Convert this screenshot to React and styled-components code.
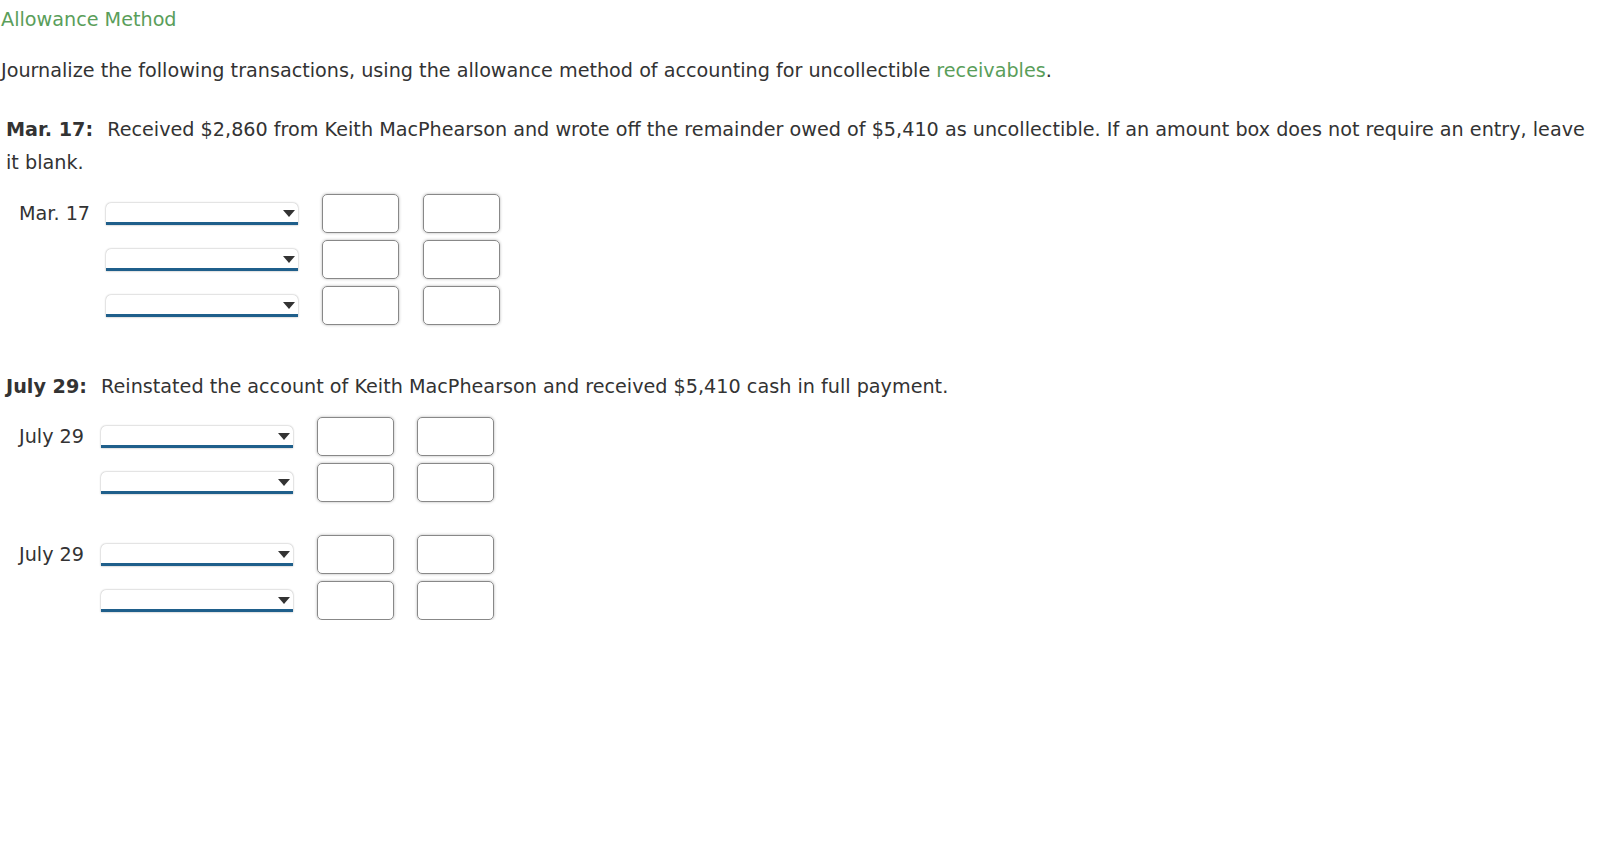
import React from "react";
import styled, { createGlobalStyle } from "styled-components";

const Global = createGlobalStyle`
    body {
        margin: 0;
        background: #fff;
        font-family: "DejaVu Sans", Verdana, sans-serif;
        color: #333;
        font-size: 19.2px;
    }
`;

const Page = styled.div`
    padding: 7px 0 0 1px;
`;

const Title = styled.div`
    color: #5a9e5a;
    line-height: 26px;
`;

const Intro = styled.p`
    margin: 25px 0 0 0;
    line-height: 26px;
`;

const Green = styled.span`
    color: #5a9e5a;
`;

const Problem = styled.div`
    margin: ${(props) => props.top}px 0 0 5px;
    max-width: 1592px;
    line-height: 33px;
`;

const Strong = styled.b`
    margin-right: 8px;
`;

const Group = styled.div`
    margin: ${(props) => props.top}px 0 0 18px;
    display: flex;
    flex-direction: column;
    gap: 7px;
`;

const Row = styled.div`
    display: flex;
    align-items: center;
`;

const DateLabel = styled.div`
    width: ${(props) => props.w}px;
    line-height: 22px;
`;

const SelectBox = styled.div`
    position: relative;
    width: 192px;
    height: 19px;
    background: #fff;
    border-radius: 5px 5px 0 0;
    box-shadow: 0 0 2px rgba(0, 0, 0, 0.4);
    border-bottom: 3px solid #1f5f8b;
    margin-right: 24px;

    &::after {
        content: "";
        position: absolute;
        right: 3px;
        top: 7px;
        border-left: 6px solid transparent;
        border-right: 6px solid transparent;
        border-top: 7px solid #333;
    }
`;

const Amount = styled.div`
    width: 75px;
    height: 37px;
    border: 1px solid #888;
    border-radius: 5px;
    box-shadow: 0 0 3px rgba(0, 0, 0, 0.3);
    margin-right: ${(props) => props.gap}px;
`;

function JournalRow({ label, labelWidth, gap }) {
    return (
        <Row>
            <DateLabel w={labelWidth}>{label}</DateLabel>
            <SelectBox />
            <Amount gap={gap} />
            <Amount gap={0} />
        </Row>
    );
}

function App() {
    return (
        <Page>
            <Global />
            <Title>Allowance Method</Title>
            <Intro>
                Journalize the following transactions, using the allowance method of accounting for uncollectible <Green>receivables</Green>.
            </Intro>
            <Problem top={29}>
                <Strong>Mar. 17:</Strong> Received $2,860 from Keith MacPhearson and wrote off the remainder owed of $5,410 as uncollectible. If an amount box does not require an entry, leave it blank.
            </Problem>
            <Group top={15}>
                <JournalRow label="Mar. 17" labelWidth={87} gap={24} />
                <JournalRow label="" labelWidth={87} gap={24} />
                <JournalRow label="" labelWidth={87} gap={24} />
            </Group>
            <Problem top={45}>
                <Strong>July 29:</Strong> Reinstated the account of Keith MacPhearson and received $5,410 cash in full payment.
            </Problem>
            <Group top={14}>
                <JournalRow label="July 29" labelWidth={82} gap={23} />
                <JournalRow label="" labelWidth={82} gap={23} />
            </Group>
            <Group top={33}>
                <JournalRow label="July 29" labelWidth={82} gap={23} />
                <JournalRow label="" labelWidth={82} gap={23} />
            </Group>
        </Page>
    );
}

export default App;
